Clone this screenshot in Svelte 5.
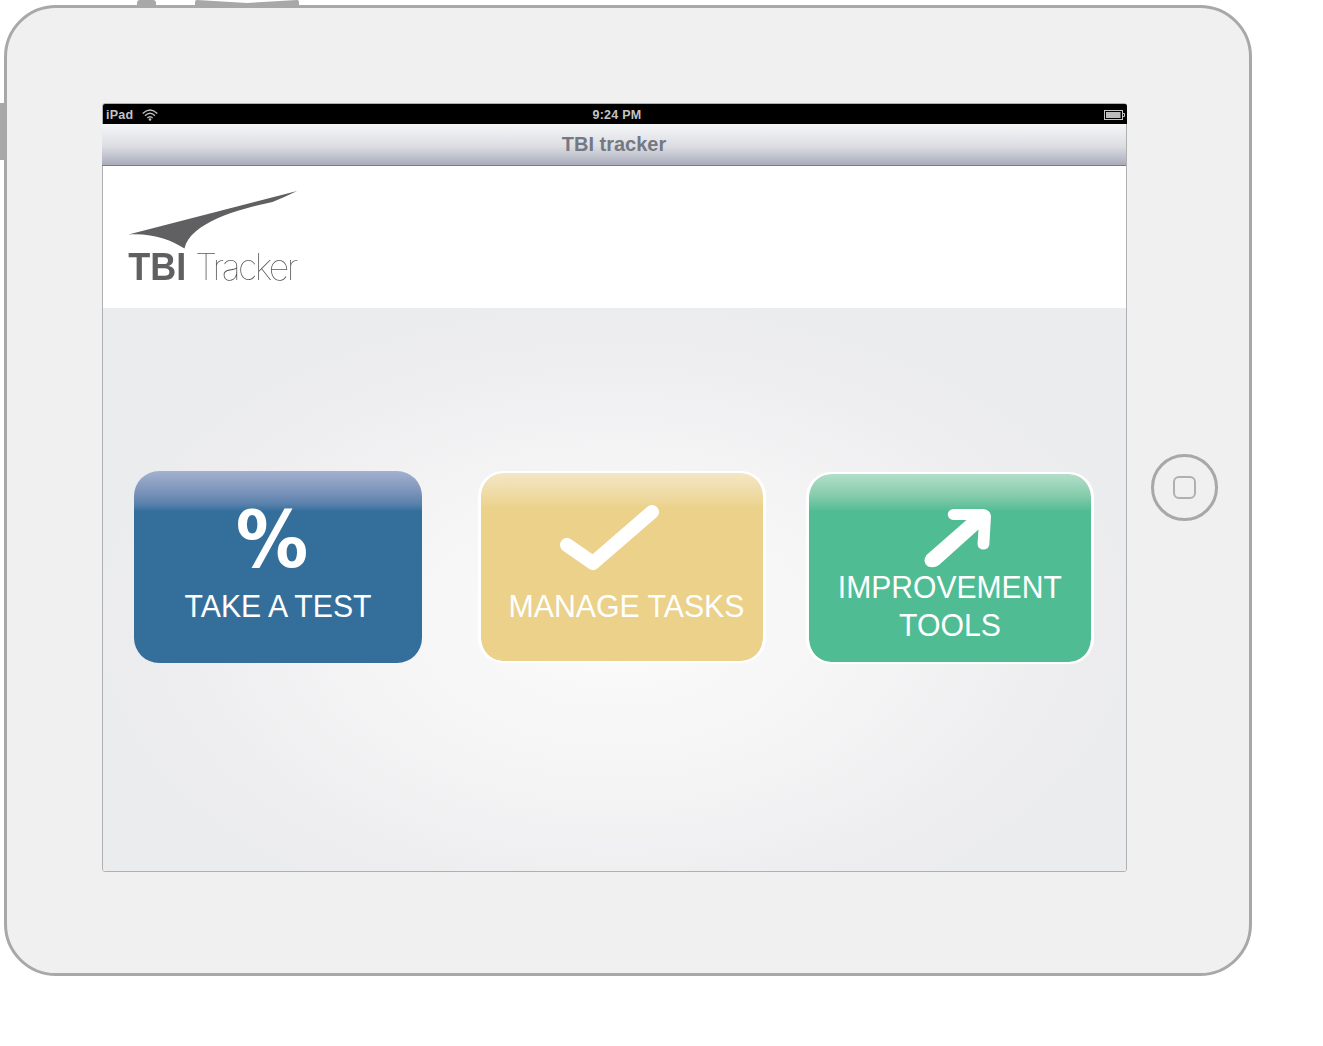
<script>
  const cards = [
    {
      id: 'test',
      lines: [{ text: 'TAKE A TEST', x: 50.5, y: 145.5, w: 187 }]
    },
    {
      id: 'tasks',
      lines: [{ text: 'MANAGE TASKS', x: 30.5, y: 145.5, w: 236 }]
    },
    {
      id: 'tools',
      lines: [
        { text: 'IMPROVEMENT', x: 31.8, y: 125.5, w: 224 },
        { text: 'TOOLS', x: 93, y: 163.5, w: 102 }
      ]
    }
  ];
</script>

<main class="page">
  <div class="device">
    <i class="hw lock"></i>
    <svg class="hw rocker" width="104" height="6" viewBox="0 0 104 6">
      <path d="M0 6V2Q0 0 2 0L52 3L102 0Q104 0 104 2V6Z" fill="#a8a8a8" />
    </svg>
    <i class="hw side"></i>

    <section class="screen">
      <header class="status">
        <div class="carrier">
          <span>iPad</span>
          <svg width="16" height="12" viewBox="0 0 16 12" fill="none" stroke="#bebebe" stroke-width="1.4">
            <path d="M.7 4.400Q8-2.600 15.300 4.400" />
            <path d="M3 6.700Q8 2 13 6.700" />
            <path d="M5.300 9Q8 6.400 10.700 9" />
            <circle cx="8" cy="10.500" r="1.300" fill="#bebebe" stroke="none" />
          </svg>
        </div>
        <time>9:24 PM</time>
        <svg class="battery" width="21" height="10" viewBox="0 0 21 10">
          <rect x=".5" y=".5" width="18" height="9" fill="none" stroke="#c4c4c4" />
          <rect x="2" y="2" width="14.500" height="6" fill="#bdbdbd" />
          <path d="M19 3.500h1.500v3H19" fill="none" stroke="#c4c4c4" />
        </svg>
      </header>
      <nav class="title"><h1>TBI tracker</h1></nav>

      <div class="brand">
        <svg width="190" height="104" viewBox="0 0 190 104">
          <path
            d="M.5 43.500L169 0Q157 6 144.500 11C110 18 62 32 56.500 57.500C43 49 25 42 .5 43.500Z"
            fill="#606062"
          />
          <text class="tbi" x="0.300" y="89" textLength="58" lengthAdjust="spacingAndGlyphs">TBI</text>
          <text class="tracker" x="67" y="89" textLength="101" lengthAdjust="spacingAndGlyphs">Tracker</text>
        </svg>
      </div>

      <div class="content">
        {#each cards as card (card.id)}
          <button class="card {card.id}">
            <svg width="288" height="192" viewBox="0 0 288 192">
              {#if card.id === 'test'}
                <text class="percent" x="101.800" y="96" textLength="72.500" lengthAdjust="spacingAndGlyphs">%</text>
              {:else if card.id === 'tasks'}
                <path d="M89 74L115 92L174 41" fill="none" stroke="#fff" stroke-width="14" stroke-linecap="round" stroke-linejoin="round" />
              {:else}
                <path
                  d="M147 37H177Q184.500 38 185 44L183.300 73C182 79.500 172 79 171.500 72L172.500 57.500L133 93Q128 96.500 122 94.500Q115.500 90 120.500 83L160.500 48H147C140 47 140 38 147 37Z"
                  fill="#fff"
                />
              {/if}
              {#each card.lines as line}
                <text class="label" x={line.x} y={line.y} textLength={line.w} lengthAdjust="spacingAndGlyphs">{line.text}</text>
              {/each}
            </svg>
          </button>
        {/each}
      </div>
    </section>

    <div class="home"><i></i></div>
  </div>
</main>

<style>
  :global(body) {
    background: #fff;
  }
  .page {
    box-sizing: border-box;
    height: 1046px;
    padding: 5px 0 0 4px;
    overflow: hidden;
    font-family: 'Liberation Sans', Arial, sans-serif;
  }
  .device {
    position: relative;
    box-sizing: border-box;
    width: 1248px;
    height: 971px;
    padding: 95px 0 0 95px;
    border: 3px solid #a8a8a8;
    border-radius: 52px;
    background: #f0f0f0;
    display: flex;
    align-items: flex-start;
    gap: 24px;
  }
  .hw {
    position: absolute;
  }
  .lock {
    left: 130px;
    top: -8px;
    width: 19px;
    height: 6px;
    border-radius: 3px 3px 0 0;
    background: #a8a8a8;
  }
  .rocker {
    left: 188px;
    top: -8px;
  }
  .side {
    left: -9px;
    top: 95px;
    width: 7px;
    height: 57px;
    border-radius: 3px 0 0 3px;
    background: #a8a8a8;
  }
  .screen {
    box-sizing: border-box;
    width: 1025px;
    height: 769px;
    border: 1px solid #b0b0b3;
    border-radius: 3px;
    display: flex;
    flex-direction: column;
    background: #fff;
  }
  .status {
    box-sizing: border-box;
    height: 20px;
    margin-right: -1px;
    padding: 0 2px 0 3px;
    border-radius: 2px 2px 0 0;
    background: #000;
    color: #c4c4c4;
    display: grid;
    grid-template-columns: 1fr auto 1fr;
    grid-template-rows: 20px;
    align-items: center;
    font-size: 12.5px;
    font-weight: 700;
    line-height: 20px;
    letter-spacing: 0.25px;
  }
  .status span,
  .status time {
    padding-top: 2px;
  }
  .carrier {
    display: flex;
    align-items: center;
    gap: 9px;
  }
  .carrier svg {
    margin-top: 1px;
  }
  .status time {
    padding-left: 3px;
  }
  .battery {
    justify-self: end;
    margin-top: 2px;
  }
  .title {
    box-sizing: border-box;
    height: 42px;
    margin: 0 0 0 -1px;
    border-bottom: 1px solid #777b8e;
    background: linear-gradient(#f5f6f8, #dcdde2 55%, #c5c7d1 75%, #a9abbb);
    display: flex;
    align-items: center;
    justify-content: center;
  }
  h1 {
    margin: -2px 0 0;
    font-size: 20px;
    line-height: 38px;
    color: #737882;
  }
  .brand {
    height: 142px;
    box-sizing: border-box;
    padding: 25px 0 0 25px;
    background: #fff;
  }
  .brand svg {
    display: block;
    will-change: transform;
  }
  .tbi {
    font-size: 38px;
    font-weight: 700;
    fill: #606062;
  }
  .tracker {
    font-family: Inter, 'Liberation Sans', sans-serif;
    font-size: 36.5px;
    font-weight: 100;
    letter-spacing: -2.6px;
    fill: #58585a;
  }
  .content {
    flex: 1;
    display: flex;
    align-items: flex-start;
    padding: 163px 0 0 31px;
    border-radius: 0 0 2px 2px;
    background: radial-gradient(ellipse 540px 330px at 50% 56%, #fbfbfb, #f5f5f6 45%, #ededef 85%, #ebecee);
  }
  .card {
    box-sizing: border-box;
    flex: none;
    width: 288px;
    height: 192px;
    margin: 0;
    padding: 0;
    border: 0;
    border-radius: 25px;
    overflow: hidden;
  }
  .card svg {
    display: block;
  }
  .card.test {
    background: linear-gradient(#a3b1d0, #7f95bb 10%, #5b82ad 17%, #346f9c 21%);
  }
  .card.tasks,
  .card.tools {
    border: solid #fff;
    border-width: 2px 3px;
  }
  .card.tasks {
    margin-left: 56px;
    background: linear-gradient(#f4e6c6, #f0dca9 10%, #ebd189 19%) padding-box;
  }
  .card.tools {
    margin: 1px 0 0 40px;
    background: linear-gradient(#b2dec9, #83cbaa 12%, #50bc94 20%) padding-box;
  }
  .card.tasks svg,
  .card.tools svg {
    margin: -2px -3px;
  }
  .percent {
    font-family: 'DejaVu Sans', sans-serif;
    font-size: 78px;
    font-weight: 700;
    fill: #fff;
  }
  .label {
    font-size: 31.5px;
    fill: #fff;
  }
  .home {
    box-sizing: border-box;
    width: 67px;
    height: 67px;
    margin-top: 351px;
    border: 3px solid #a8a8a8;
    border-radius: 50%;
    display: flex;
    align-items: center;
    justify-content: center;
  }
  .home i {
    box-sizing: border-box;
    width: 23px;
    height: 23px;
    border: 2px solid #b0b0b0;
    border-radius: 6px;
  }
</style>
